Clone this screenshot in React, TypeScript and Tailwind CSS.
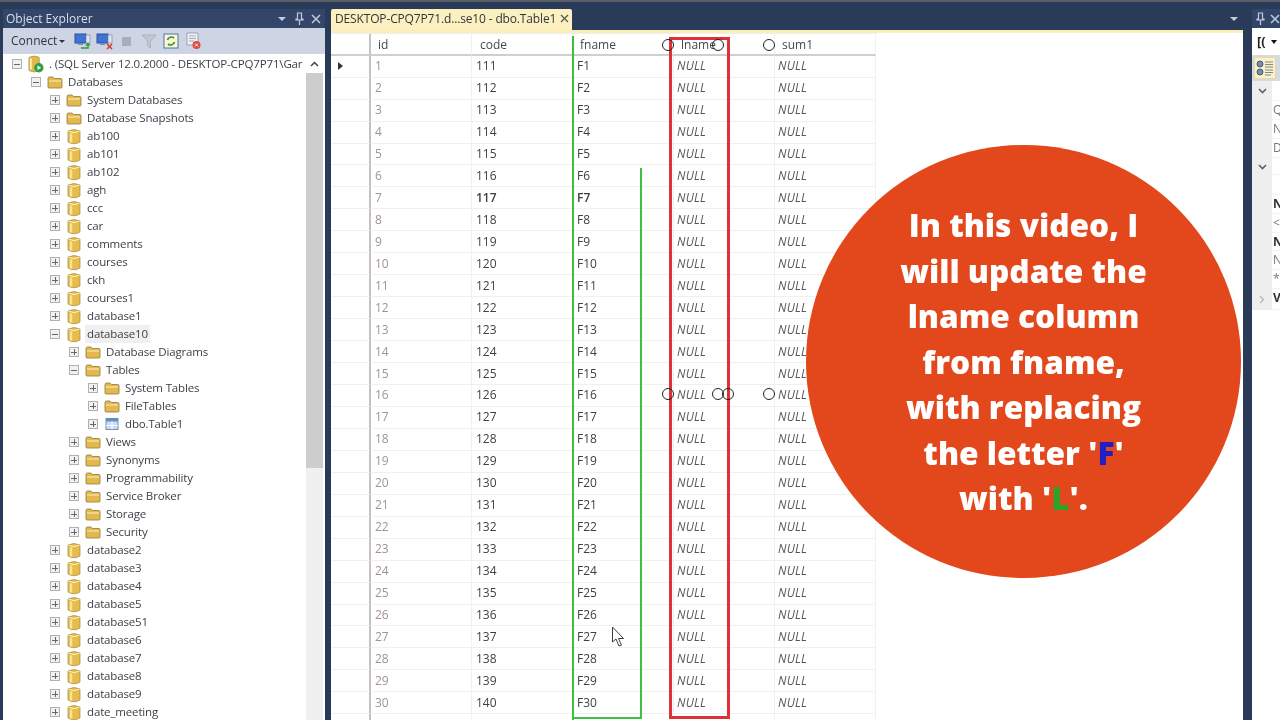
import { Fragment } from "react"

type Kind = "server" | "folder" | "db" | "table"

type Node = {
  level: number
  open?: boolean
  kind: Kind
  label: string
  selected?: boolean
}

const indent = ["pl-[9px]", "pl-[28px]", "pl-[47px]", "pl-[66px]", "pl-[85px]"]

const dbs = (names: string[]): Node[] => names.map((label) => ({ level: 2, kind: "db", label }))

const tree: Node[] = [
  { level: 0, open: true, kind: "server", label: ". (SQL Server 12.0.2000 - DESKTOP-CPQ7P71\\Gar" },
  { level: 1, open: true, kind: "folder", label: "Databases" },
  { level: 2, kind: "folder", label: "System Databases" },
  { level: 2, kind: "folder", label: "Database Snapshots" },
  ...dbs(["ab100", "ab101", "ab102", "agh", "ccc", "car", "comments", "courses", "ckh", "courses1", "database1"]),
  { level: 2, open: true, kind: "db", label: "database10", selected: true },
  { level: 3, kind: "folder", label: "Database Diagrams" },
  { level: 3, open: true, kind: "folder", label: "Tables" },
  { level: 4, kind: "folder", label: "System Tables" },
  { level: 4, kind: "folder", label: "FileTables" },
  { level: 4, kind: "table", label: "dbo.Table1" },
  { level: 3, kind: "folder", label: "Views" },
  { level: 3, kind: "folder", label: "Synonyms" },
  { level: 3, kind: "folder", label: "Programmability" },
  { level: 3, kind: "folder", label: "Service Broker" },
  { level: 3, kind: "folder", label: "Storage" },
  { level: 3, kind: "folder", label: "Security" },
  ...dbs(["database2", "database3", "database4", "database5", "database51", "database6", "database7", "database8", "database9", "date_meeting"]),
]

const rows = Array.from({ length: 31 }, (_, i) => i + 1)

function TreeIcon({ kind }: { kind: Kind }) {
  if (kind === "folder") {
    return (
      <svg width="16" height="14" viewBox="0 0 16 14">
        <path d="M1 3.5 Q1 2 2.5 2 H6 L7.5 3.5 H14 Q15 3.5 15 5 V12 Q15 13 14 13 H2 Q1 13 1 12 Z" fill="#e3b94f" stroke="#8f7a3a" strokeWidth="0.8" />
        <path d="M2 5.5 H14 V6.5 H2 Z" fill="#fbeeb8" />
      </svg>
    )
  }
  if (kind === "table") {
    return (
      <svg width="16" height="14" viewBox="0 0 16 14">
        <rect x="2" y="1.5" width="12" height="11" fill="#c9dcf2" stroke="#6d8fb8" />
        <rect x="2" y="1.5" width="12" height="3" fill="#5f8dc4" />
        <path d="M8 4.5 V12.5 M2 8.5 H14" stroke="#fff" />
      </svg>
    )
  }
  if (kind === "server") {
    return (
      <svg width="17" height="20" viewBox="0 0 17 20">
        <path d="M1 3 Q7 0 12 3 V17 Q7 20 1 17 Z" fill="#e2b94c" stroke="#a98a33" strokeWidth="0.7" />
        <path d="M3 4 V16" stroke="#fbeeb8" strokeWidth="2" />
        <circle cx="11.5" cy="14" r="5" fill="#2f9e44" />
        <path d="M10 11.5 L14 14 L10 16.5 Z" fill="#fff" />
      </svg>
    )
  }
  return (
    <svg width="14" height="17" viewBox="0 0 14 17">
      <path d="M1 3 Q7 0 13 3 V14 Q7 17.5 1 14 Z" fill="#e6bc4e" stroke="#a88a3a" strokeWidth="0.7" />
      <path d="M1.5 3.2 Q7 6 12.5 3.2" fill="none" stroke="#fdf3c4" strokeWidth="1" />
      <path d="M4 5.5 V14.5" stroke="#f8e39a" strokeWidth="2.5" />
    </svg>
  )
}

function Expander({ open }: { open?: boolean }) {
  return (
    <span className="w-[10px] h-[10px] shrink-0 border border-[#b0b0b0] bg-[#f1f1f1] flex items-center justify-center relative">
      <span className="w-[6px] h-px bg-[#666]" />
      {!open && <span className="absolute w-px h-[6px] bg-[#666]" />}
    </span>
  )
}

function ToolIcons() {
  return (
    <div className="flex items-center ml-[9px]">
      <svg width="18" height="18" viewBox="0 0 18 18">
        <rect x="1" y="2" width="11" height="9" fill="#3f74d6" stroke="#2a4f9e" />
        <rect x="4" y="11" width="5" height="2" fill="#7d8ca8" />
        <rect x="12" y="3" width="4" height="8" fill="#dfe5ee" stroke="#7d8ca8" strokeWidth="0.7" />
        <path d="M7 16 H14 V12 M12 13.5 L14 11.5 L16 13.5" fill="none" stroke="#2e9c3c" strokeWidth="1.4" />
      </svg>
      <svg className="ml-[4px]" width="18" height="18" viewBox="0 0 18 18">
        <rect x="1" y="2" width="11" height="9" fill="#3f74d6" stroke="#2a4f9e" />
        <rect x="4" y="11" width="5" height="2" fill="#7d8ca8" />
        <rect x="12" y="3" width="4" height="8" fill="#dfe5ee" stroke="#7d8ca8" strokeWidth="0.7" />
        <path d="M11 12 L16 17 M16 12 L11 17" stroke="#d43c2c" strokeWidth="1.6" />
      </svg>
      <span className="ml-[8px] w-[9px] h-[9px] bg-[#a8aeb8]" />
      <svg className="ml-[10px]" width="16" height="16" viewBox="0 0 16 16">
        <path d="M1 2 H15 L9.5 8 V15 L6.5 13 V8 Z" fill="#c3c8d0" stroke="#adb3bc" />
      </svg>
      <svg className="ml-[6px]" width="16" height="16" viewBox="0 0 16 16">
        <rect x="1" y="1" width="14" height="14" fill="#fdf6d2" stroke="#4f74ad" />
        <path d="M4.5 7 A4 4 0 0 1 11 5 M11.5 9 A4 4 0 0 1 5 11" fill="none" stroke="#2c9a3c" strokeWidth="1.7" />
      </svg>
      <svg className="ml-[5px]" width="18" height="18" viewBox="0 0 18 18">
        <path d="M3 1 H14 V13 H3 Z" fill="#eef0f3" stroke="#8c94a3" strokeWidth="0.8" />
        <path d="M5 4 H12 M5 6.5 H12 M5 9 H10" stroke="#a3aab6" />
        <circle cx="12.5" cy="13" r="4" fill="#de4b3c" />
        <path d="M11 11.5 L14 14.5 M14 11.5 L11 14.5" stroke="#fff" />
      </svg>
    </div>
  )
}

function PaneButtons() {
  return (
    <div className="flex items-center text-[#c3ccdc]">
      <span className="w-0 h-0 border-x-[4px] border-x-transparent border-t-[4px] border-t-[#c3ccdc]" />
      <svg className="ml-[9px]" width="9" height="13" viewBox="0 0 9 13">
        <path d="M2.5 1 H6.5 V7 H8 V8 H1 V7 H2.5 Z M4.5 8 V13" fill="none" stroke="#c3ccdc" strokeWidth="1.2" />
      </svg>
      <svg className="ml-[7px]" width="10" height="10" viewBox="0 0 10 10">
        <path d="M1 1 L9 9 M9 1 L1 9" stroke="#c3ccdc" strokeWidth="1.5" />
      </svg>
    </div>
  )
}

function ObjectExplorer() {
  return (
    <section className="w-[322px] ml-[3px] h-full flex flex-col shrink-0">
      <div className="h-[19px] flex items-center justify-between pl-[3px] pr-[4px] bg-[#33466a] text-[12px] text-[#d9dfea]">
        <span>Object Explorer</span>
        <PaneButtons />
      </div>
      <div className="h-[26px] flex items-center pl-[8px] bg-[#cdd5e4] text-[#30343c] text-[12px]">
        <span>Connect</span>
        <span className="ml-[2px] w-0 h-0 border-x-[3px] border-x-transparent border-t-[3px] border-t-[#333]" />
        <ToolIcons />
      </div>
      <div className="flex-1 min-h-0 flex bg-white overflow-hidden">
        <ul className="w-[303px] shrink-0 overflow-hidden pt-px">
          {tree.map((n) => (
            <li key={n.label} className={`h-[18px] flex items-center whitespace-nowrap ${indent[n.level]}`}>
              <Expander open={n.open} />
              <span className="w-[16px] ml-[6px] shrink-0 flex justify-center">
                <TreeIcon kind={n.kind} />
              </span>
              <span className={`ml-[3px] px-[2px] text-[11.5px] tracking-[-0.15px] leading-[18px] text-[#3b3f47] ${n.selected ? "bg-[#f0f0f0]" : ""}`}>
                {n.label}
              </span>
            </li>
          ))}
        </ul>
        <div className="w-[17px] shrink-0 flex flex-col bg-[#f0f0f0]">
          <div className="h-[19px] flex items-center justify-center bg-white">
            <svg width="9" height="6" viewBox="0 0 9 6">
              <path d="M1 5 L4.5 1.5 L8 5" fill="none" stroke="#444" strokeWidth="1.5" />
            </svg>
          </div>
          <div className="h-[395px] bg-[#cdcdcd]" />
        </div>
      </div>
    </section>
  )
}

const columns = [
  { name: "id", pad: "pl-[7px]" },
  { name: "code", pad: "pl-[8px]" },
  { name: "fname", pad: "pl-[7px]" },
  { name: "lname", pad: "pl-[7px]" },
  { name: "sum1", pad: "pl-[7px]" },
]

function ResultsGrid() {
  const cell = "h-full flex items-center border-r border-r-[#f0f0f0] border-b border-b-[#f0f0f0]"
  const nullCell = `${cell} pl-[3px] italic tracking-[0.2px] text-[#55565c]`
  return (
    <div className="w-[546px] text-[12px] grid grid-cols-[40px_repeat(5,101px)] grid-rows-[21.7px] auto-rows-[21.96px] border-t border-[#f0f0f0]">
      <div className="border-r-2 border-r-[#c3c3c3] border-b-2 border-b-[#cfcfcf]" />
      {columns.map((c) => (
        <div key={c.name} className={`h-full flex items-center pt-[2px] ${c.pad} text-[#45484f] border-r border-r-[#f0f0f0] border-b-2 border-b-[#cfcfcf]`}>
          {c.name}
        </div>
      ))}
      {rows.map((r) => (
        <Fragment key={r}>
          <div className="border-r-2 border-r-[#c3c3c3] border-b border-b-[#f0f0f0] flex items-center pl-[7px]">
            {r === 1 && <span className="w-0 h-0 border-y-[4px] border-y-transparent border-l-[5px] border-l-[#333]" />}
          </div>
          <div className={`${cell} pl-[4px] text-[#a5938a]`}>{r}</div>
          <div className={`${cell} pl-[4px] text-[#3f4046] ${r === 7 ? "font-semibold" : ""}`}>{110 + r}</div>
          <div className={`${cell} pl-[4px] text-[#3f4046] ${r === 7 ? "font-semibold" : ""}`}>F{r}</div>
          <div className={nullCell}>NULL</div>
          <div className={nullCell}>NULL</div>
        </Fragment>
      ))}
    </div>
  )
}

function DocArea() {
  return (
    <section className="flex-1 ml-[6px] h-full flex flex-col min-w-0">
      <div className="h-[21px] flex items-center justify-between">
        <div className="h-full flex items-center pl-[4px] pr-[3px] pb-[2px] bg-[#fcefc0] text-[12px] tracking-[-0.15px] text-[#33363d] rounded-t-[2px]">
          <span>DESKTOP-CPQ7P71.d...se10 - dbo.Table1</span>
          <svg className="ml-[4px]" width="9" height="9" viewBox="0 0 9 9">
            <path d="M1 1 L8 8 M8 1 L1 8" stroke="#555" strokeWidth="1.2" />
          </svg>
        </div>
        <span className="mr-[5px] mb-[2px] w-0 h-0 border-x-[4px] border-x-transparent border-t-[4px] border-t-[#c3ccdc]" />
      </div>
      <div className="h-[3px] bg-[#fbeebb]" />
      <div className="flex-1 min-h-0 bg-white overflow-hidden">
        <ResultsGrid />
      </div>
    </section>
  )
}

const propRows = [
  { t: "", h: "h-[20px]", icon: "open" },
  { t: "Qu", h: "h-[19px]" },
  { t: "Na", h: "h-[19px]" },
  { t: "De", h: "h-[19px]" },
  { t: "", h: "h-[17px]", icon: "open" },
  { t: "", h: "h-[20px]" },
  { t: "Na", h: "h-[19px]", b: true },
  { t: "<N", h: "h-[19px]" },
  { t: "Na", h: "h-[18px]", b: true },
  { t: "Na", h: "h-[19px]" },
  { t: "**", h: "h-[19px]" },
  { t: "Ve", h: "h-[21px]", b: true, icon: "closed" },
]

function PropertiesPane() {
  return (
    <section className="w-[28px] ml-[9px] h-full flex flex-col shrink-0 overflow-hidden">
      <div className="h-[19px] flex items-center pl-[4px] bg-[#33466a]">
        <svg width="9" height="13" viewBox="0 0 9 13">
          <path d="M2.5 1 H6.5 V7 H8 V8 H1 V7 H2.5 Z M4.5 8 V13" fill="none" stroke="#c3ccdc" strokeWidth="1.2" />
        </svg>
        <svg className="ml-[5px]" width="10" height="10" viewBox="0 0 10 10">
          <path d="M1 1 L9 9 M9 1 L1 9" stroke="#c3ccdc" strokeWidth="1.5" />
        </svg>
      </div>
      <div className="h-[27px] flex items-center pl-[5px] bg-white text-[13px] font-bold text-[#222]">
        <span>[(</span>
        <span className="ml-[5px] w-0 h-0 border-x-[3px] border-x-transparent border-t-[4px] border-t-[#111]" />
      </div>
      <div className="h-[26px] flex items-center pl-[2px] bg-[#d6dae3]">
        <div className="w-[22px] h-[22px] flex items-center justify-center bg-[#fbf0c8] border border-[#e7d9a4]">
          <svg width="18" height="18" viewBox="0 0 18 18">
            <circle cx="4" cy="5" r="3" fill="#6f8db5" stroke="#4d5a70" />
            <circle cx="4" cy="13" r="3" fill="#6f8db5" stroke="#4d5a70" />
            <path d="M9 3 H17 M9 5.5 H17 M9 8 H17 M9 11 H17 M9 13.5 H17 M9 16 H15" stroke="#7e8794" />
          </svg>
        </div>
      </div>
      <div className="flex-1 flex flex-col bg-white">
        {propRows.map((p, i) => (
          <div key={i} className={`${p.h} flex shrink-0 text-[12px] text-[#777]`}>
            <div className="w-[20px] bg-[#eeeeee] flex items-center justify-center shrink-0">
              {p.icon === "open" && (
                <svg width="9" height="6" viewBox="0 0 9 6">
                  <path d="M1 1 L4.5 4.5 L8 1" fill="none" stroke="#5b6068" strokeWidth="1.6" />
                </svg>
              )}
              {p.icon === "closed" && (
                <svg width="6" height="9" viewBox="0 0 6 9">
                  <path d="M1 1 L4.5 4.5 L1 8" fill="none" stroke="#b5b5b5" strokeWidth="1.3" />
                </svg>
              )}
            </div>
            <div className={`flex-1 border-b border-[#f4f4f4] leading-[18px] pl-px whitespace-nowrap overflow-hidden ${p.b ? "font-bold text-[#333]" : ""}`}>
              {p.t}
            </div>
          </div>
        ))}
      </div>
    </section>
  )
}

const marks = [
  "left-[662px] top-[39px]",
  "left-[712px] top-[39px]",
  "left-[763px] top-[39px]",
  "left-[662px] top-[388px]",
  "left-[712px] top-[388px]",
  "left-[722px] top-[388px]",
  "left-[763px] top-[388px]",
]

export default function App() {
  return (
    <div className="relative w-[1280px] h-[720px] overflow-hidden bg-[#2a3b59] font-['Open_Sans',sans-serif] flex flex-col blur-[0.35px]">
      <div className="h-[2px] bg-[#5a5d63] shrink-0" />
      <div className="flex-1 min-h-0 pt-[7px] flex">
        <ObjectExplorer />
        <DocArea />
        <PropertiesPane />
      </div>

      {/* annotations drawn on the video */}
      <div className="absolute left-[572px] top-[36px] w-[2px] h-[684px] bg-[#3fbf3f]" />
      <div className="absolute left-[572px] top-[717px] w-[70px] h-[2px] bg-[#3fbf3f]" />
      <div className="absolute left-[640px] top-[168px] w-[2px] h-[551px] bg-[#3fbf3f]" />
      <div className="absolute left-[669px] top-[37px] w-[61px] h-[682px] border-[3px] border-[#dc3238]" />
      {marks.map((m) => (
        <span key={m} className={`absolute ${m} w-[12px] h-[12px] rounded-full border border-[#222]`} />
      ))}
      <svg className="absolute left-[611px] top-[626px]" width="15" height="22" viewBox="0 0 15 22">
        <path d="M1.5 1 V16 L5 13 L8 20 L10.5 19 L7.5 12.5 H12.5 Z" fill="#fff" stroke="#3a3f47" strokeWidth="1" />
      </svg>

      <div className="absolute left-[806px] top-[145px] w-[435px] h-[433px] rounded-full bg-[#e3481c] flex flex-col items-center justify-center text-white font-extrabold text-[31.6px] leading-[45.6px]">
        <p>In this video, I</p>
        <p>will update the</p>
        <p>lname column</p>
        <p>from fname,</p>
        <p>with replacing</p>
        <p>the letter '<span className="text-[#1f1fc8]">F</span>'</p>
        <p>with '<span className="text-[#2aa52a]">L</span>'.</p>
      </div>
    </div>
  )
}
